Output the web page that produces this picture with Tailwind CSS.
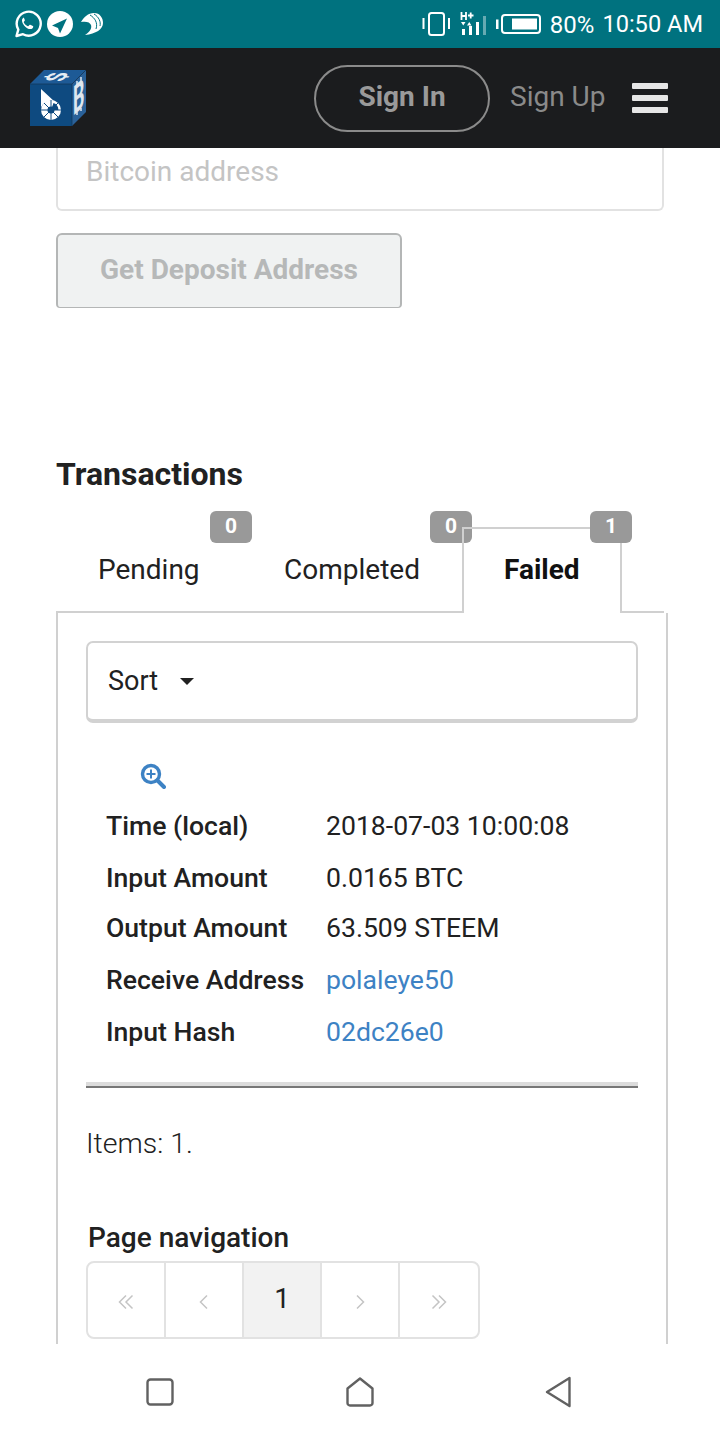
<!DOCTYPE html>
<html>
<head>
<meta charset="UTF-8">
<title>Deposit</title>
<meta name="viewport" content="width=device-width, initial-scale=1.0">
<script src="https://cdn.jsdelivr.net/npm/@tailwindcss/browser@4"></script>
</head>
<body class="bg-white font-['Roboto',sans-serif] text-[#212121]">
<div class="flex h-[1440px] w-[720px] flex-col overflow-hidden">

  <!-- status bar -->
  <div class="flex h-12 shrink-0 items-center justify-between bg-[#00727f] pl-[14px] pr-[17px] text-white">
    <div class="flex items-center">
      <svg class="h-7 w-7" viewBox="0 0 28 28">
        <path d="M2.500 26l1.800-6.400A12 12 0 1 1 9 24.200z" fill="none" stroke="#fff" stroke-width="2.400" stroke-linejoin="round"/>
        <path d="M10 7.800c-.6 0-1.600.6-1.900 1.800-.4 1.600.3 3.700 2 5.800 1.800 2.200 4.300 3.700 6.300 3.700 1.500 0 2.700-1 2.800-2.100.1-.6 0-.9-.3-1l-2.600-1.300c-.3-.1-.6 0-.8.2l-1 1.200c-.2.2-.4.3-.7.1-1.800-.8-3.100-2.100-4-3.800-.1-.3 0-.5.1-.7l.8-1c.2-.2.2-.5.1-.7l-1-2.600c-.2-.4-.4-.6-.8-.6z" fill="#fff"/>
      </svg>
      <svg class="ml-[5px] h-[26px] w-[26px]" viewBox="0 0 26 26">
        <circle cx="13" cy="13" r="13" fill="#fff"/>
        <path d="M20 7.500L5 14.500l6 2.500 2 5.500z" fill="#00727f"/>
      </svg>
      <svg class="ml-[7px] h-6 w-6" viewBox="0 0 24 24">
        <path d="M1 10C4 5 8 1 14 1c6 0 9 5 9 10 0 6-7 11-18 12 5-3 7-7 6-10-1-3-5-4-10-3z" fill="#fff"/>
        <path d="M10 3c5 3 8 8 6 14M14 2c5 3 7 8 6 12" fill="none" stroke="#00727f" stroke-width="1"/>
      </svg>
    </div>
    <div class="flex items-center">
      <svg class="h-[26px] w-[30px]" viewBox="0 0 30 26" fill="none" stroke="#fff" stroke-width="2">
        <rect x="8" y="2" width="15" height="22" rx="2.500"/>
        <path d="M2.500 7v11M28 7v11"/>
      </svg>
      <svg class="ml-[9px] h-[26px] w-[27px]" viewBox="0 0 27 26" fill="#fff">
        <rect x="2" y="18" width="3" height="6"/><rect x="9" y="15" width="3" height="9"/><rect x="16" y="11" width="3" height="13"/><rect x="23" y="5" width="3" height="19" opacity=".4"/>
        <path d="M1.500 1v8M6 1v8M1.500 5h4.500M8 4.500h5.500M10.700 1.500v6" stroke="#fff" stroke-width="1.800" fill="none"/>
        <path d="M1 11h4.500l-2.250 3.500zM7 14.500h4.500L9.250 11z"/>
      </svg>
      <svg class="ml-[9px] h-[20px] w-[45px]" viewBox="0 0 45 20" fill="none">
        <rect x="0" y="5.500" width="2.500" height="9.500" fill="#fff"/>
        <rect x="6" y="1" width="38" height="18" rx="3" stroke="#fff" stroke-width="2"/>
        <rect x="16" y="4.500" width="25" height="11" fill="#fff"/>
      </svg>
      <span class="ml-[9px] mt-[1px] text-[24px] leading-none">80%</span>
      <span class="ml-[8px] mt-[1px] text-[23.600px] leading-none">10:50 AM</span>
    </div>
  </div>

  <!-- nav -->
  <div class="flex h-[100px] shrink-0 items-center bg-[#1b1c1e] pl-[30px]">
    <svg class="h-[56px] w-[56px] overflow-visible" viewBox="0 0 56 56">
      <polygon points="0,14 14,0 56,0 42,14" fill="#1d5a96"/>
      <polygon points="42,14 56,0 56,42 42,56" fill="#2a6199"/>
      <rect x="0" y="14" width="42" height="42" fill="#0e4a80"/>
      <path d="M0 14H42L56 0M42 14V56" fill="none" stroke="#123453" stroke-width=".7"/>
      <text transform="matrix(.5 -.7 1.100 0 27 7)" font-family="Roboto" font-weight="700" font-size="24" fill="#e6edf3" text-anchor="middle" dominant-baseline="central">$</text>
      <text transform="matrix(.6 -.55 0 1.350 43 46)" font-family="Roboto" font-weight="700" font-size="30" fill="#dfe7ef">B</text>
      <path d="M47 15V11M51 11V7M47 42v3M51 38v3" fill="none" stroke="#dfe7ef" stroke-width="1.500"/>
      <path d="M11 19L25 32 22 30.500C16 31 12 34 11 38z" fill="#fff"/>
      <circle cx="21" cy="40" r="10" fill="#fff"/>
      <path d="M21 40L23.500 33A7.500 7.500 0 0 1 28.400 40z" fill="#0e4a80"/>
      <path d="M21 40H11M21 40l-7-7M21 40V30M21 40l7-7M21 40H31M21 40l-7 7M21 40l7 7M21 40V50" stroke="#0e4a80" stroke-width="1"/>
      <circle cx="21" cy="40" r="3.500" fill="#0e4a80"/>
    </svg>
    <div class="ml-[228px] flex h-[67px] w-[176px] items-center justify-center rounded-full border-2 border-[#8b8b8b] pb-[2px] text-[28px] font-bold text-[#9a9a9a]">Sign In</div>
    <span class="mb-[2px] ml-5 text-[28px] text-[#8a8a8a]">Sign Up</span>
    <div class="ml-[27px] flex w-9 flex-col gap-[6px]">
      <div class="h-[6px] rounded-[1px] bg-[#e6e6e6]"></div>
      <div class="h-[6px] rounded-[1px] bg-[#e6e6e6]"></div>
      <div class="h-[6px] rounded-[1px] bg-[#e6e6e6]"></div>
    </div>
  </div>

  <!-- page, cut off by the android bar -->
  <div class="h-[1196px] shrink-0 overflow-hidden pl-[56px]">
    <div class="flex h-[63px] w-[608px] items-center rounded-b-[6px] border-x-2 border-b-2 border-[#e2e2e2] pb-[14px] pl-[28px] text-[28px] text-[#c4c4c4]">Bitcoin address</div>
    <div class="mt-[22px] flex h-[75px] w-[346px] items-center justify-center rounded-t-[6px] rounded-b-[4px] border-2 border-b border-[#b4b6b6] bg-[#f0f2f2] pb-[2px] text-[28px] font-bold text-[#b6b8b8]">Get Deposit Address</div>

    <h2 class="mt-[146px] text-[32px] leading-[40px] font-bold text-[#212121]">Transactions</h2>

    <!-- tabs -->
    <div class="mt-[33px] flex h-[86px]">
      <div class="relative h-full w-[186px] border-b-2 border-[#d0d0d0] pl-[42px] pt-[25px] text-[28px] leading-[36px]">
        Pending
        <span class="absolute -top-[16px] right-[-10px] flex h-8 w-[42px] items-center justify-center rounded-[6px] bg-[#999] pb-[2px] text-[21px] font-bold text-white">0</span>
      </div>
      <div class="relative h-full w-[220px] border-b-2 border-[#d0d0d0] pl-[42px] pt-[25px] text-[28px] leading-[36px]">
        Completed
        <span class="absolute -top-[16px] right-[-10px] flex h-8 w-[42px] items-center justify-center rounded-[6px] bg-[#999] pb-[2px] text-[21px] font-bold text-white">0</span>
      </div>
      <div class="relative h-full w-[160px] border-x-2 border-t-2 border-[#d0d0d0] pl-[40px] pt-[23px] text-[28px] leading-[36px] font-bold text-[#111]">
        Failed
        <span class="absolute -top-[18px] right-[-12px] flex h-8 w-[42px] items-center justify-center rounded-[6px] bg-[#999] pb-[2px] text-[21px] font-bold text-white">1</span>
      </div>
      <div class="h-full w-[42px] border-b-2 border-[#d0d0d0]"></div>
    </div>

    <!-- panel -->
    <div class="h-[800px] w-[612px] border-x-2 border-[#d0d0d0] px-[28px] pt-[28px]">
      <div class="flex h-[82px] items-center rounded-[7px] border-2 border-b-4 border-[#d2d2d2] pl-5 text-[27px]">
        Sort
        <span class="ml-[22px] h-0 w-0 border-x-[7px] border-t-[7px] border-x-transparent border-t-[#212121]"></span>
      </div>

      <svg class="ml-[54px] mt-[40px] h-[26px] w-[26px]" viewBox="0 0 26 26" fill="none" stroke="#3d82c4">
        <circle cx="11" cy="11" r="8.500" stroke-width="3.400"/>
        <path d="M17.500 17.500L24 24" stroke-width="4" stroke-linecap="round"/>
        <path d="M11 6.500v9M6.500 11h9" stroke-width="2"/>
      </svg>

      <div class="mt-[11px] grid grid-cols-[220px_1fr] pl-5 text-[26.600px]">
        <div class="flex h-[52px] items-center font-medium">Time (local)</div>
        <div class="flex h-[52px] items-center">2018-07-03 10:00:08</div>
        <div class="flex h-[52px] items-center font-medium">Input Amount</div>
        <div class="flex h-[52px] items-center">0.0165 BTC</div>
        <div class="flex h-[48px] items-center font-medium">Output Amount</div>
        <div class="flex h-[48px] items-center">63.509 STEEM</div>
        <div class="flex h-[56px] items-center font-medium">Receive Address</div>
        <div class="flex h-[56px] items-center text-[#3d82c4]">polaleye50</div>
        <div class="flex h-[48px] items-center font-medium">Input Hash</div>
        <div class="flex h-[48px] items-center text-[#3d82c4]">02dc26e0</div>
      </div>

      <div class="mt-[26px] h-[6px] border-t-4 border-b-2 border-t-[#dcdcdc] border-b-[#777]"></div>

      <p class="mt-[38px] text-[28.500px] leading-[36px] font-light">Items: 1.</p>

      <p class="ml-[2px] mt-[58px] text-[28px] leading-[36px] font-medium">Page navigation</p>
      <div class="mt-[5px] flex h-[78px] w-[394px] rounded-[8px] border-2 border-[#e2e2e2]">
        <div class="flex w-[78px] items-center justify-center border-r-2 border-[#e2e2e2]">
          <svg class="mt-1 h-4 w-4" viewBox="0 0 16 16" fill="none" stroke="#c4c4c4" stroke-width="1.500"><path d="M8 1.500L1.500 8 8 14.500M14.500 1.500L8 8l6.500 6.500"/></svg>
        </div>
        <div class="flex w-[78px] items-center justify-center border-r-2 border-[#e2e2e2]">
          <svg class="mt-1 h-4 w-4" viewBox="0 0 16 16" fill="none" stroke="#c4c4c4" stroke-width="1.500"><path d="M11 1.500L4.500 8l6.500 6.500"/></svg>
        </div>
        <div class="flex w-[78px] items-center justify-center border-r-2 border-[#e2e2e2] bg-[#f2f2f2] pb-[3px] text-[28px] text-[#212121]">1</div>
        <div class="flex w-[78px] items-center justify-center border-r-2 border-[#e2e2e2]">
          <svg class="mt-1 h-4 w-4" viewBox="0 0 16 16" fill="none" stroke="#c4c4c4" stroke-width="1.500"><path d="M5 1.500L11.500 8 5 14.500"/></svg>
        </div>
        <div class="flex flex-1 items-center justify-center">
          <svg class="mt-1 h-4 w-4" viewBox="0 0 16 16" fill="none" stroke="#c4c4c4" stroke-width="1.500"><path d="M1.500 1.500L8 8l-6.500 6.500M8 1.500L14.500 8 8 14.500"/></svg>
        </div>
      </div>
    </div>
  </div>

  <!-- android bar -->
  <div class="flex h-[96px] shrink-0 items-center justify-between pb-[1px] pl-[146px] pr-[147px]">
    <svg class="h-7 w-7" viewBox="0 0 28 28" fill="none" stroke="#616161" stroke-width="2.400" stroke-linejoin="round">
      <rect x="1.500" y="1.500" width="25" height="25" rx="3"/>
    </svg>
    <svg class="h-[30px] w-7" viewBox="0 0 28 30" fill="none" stroke="#616161" stroke-width="2.400" stroke-linejoin="round">
      <path d="M1.500 11.500L14 1.500l12.500 10v14.500a2.500 2.500 0 0 1-2.500 2.500H4a2.500 2.500 0 0 1-2.500-2.500z"/>
    </svg>
    <svg class="h-[32px] w-7" viewBox="0 0 28 32" fill="none" stroke="#616161" stroke-width="2.400" stroke-linejoin="round">
      <path d="M24.500 2L2 16l22.500 14z"/>
    </svg>
  </div>
</div>
</body>
</html>
